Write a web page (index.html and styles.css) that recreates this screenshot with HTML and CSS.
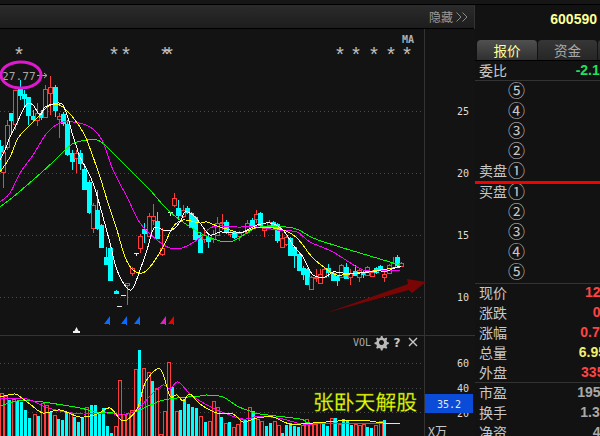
FILE: index.html
```html
<!DOCTYPE html>
<html lang="zh">
<head>
<meta charset="utf-8">
<title>600590</title>
<link rel="stylesheet" href="styles.css">
</head>
<body>
<div class="app">
  <div class="topline"></div>
  <div class="workspace">
    <section class="main">
      <header class="toolbar">
        <span class="hide-label">隐藏</span>
        <svg class="chevrons" width="12" height="10" viewBox="0 0 12 10"><path d="M0.5 0.5 5 5 0.5 9.5M6.5 0.5 11 5 6.5 9.5"/></svg>
      </header>
      <svg id="chart" class="chart" width="475" height="407" viewBox="0 29 475 407">
        <g id="grid"></g>
        <g id="volumes"></g>
        <g id="volume-lines"></g>
        <g id="candles"></g>
        <g id="price-lines"></g>
        <line class="divider" x1="0" y1="335.5" x2="475" y2="335.5"/>
        <line class="divider" x1="424.5" y1="29" x2="424.5" y2="436"/>
        <g class="marks">
          <text x="19" y="62">*</text><text x="114" y="62">*</text><text x="126" y="62">*</text><text x="165" y="62">*</text><text x="169" y="62">*</text>
          <text x="340" y="62">*</text><text x="356" y="62">*</text><text x="374" y="62">*</text><text x="391" y="62">*</text><text x="407" y="62">*</text>
        </g>
        <text class="ma-label" x="402" y="43">MA</text>
        <text class="peak" x="2" y="80">27.77</text>
        <path class="peak-arrow" d="M37 75.5H47M44 73 47 75.5 44 78"/>
        <ellipse class="peak-ring" cx="21" cy="75" rx="20" ry="13"/>
        <path class="low-tick" d="M121 295.5H126M117 306.5H122"/>
        <path class="flag-white" d="M76.500 327 78.500 331H80V333H73V331H74.500Z"/>
        <path class="flag-blue" d="M110 316V325H109V324H104Z"/>
        <path class="flag-blue" d="M127 316V325H126V324H121Z"/>
        <path class="flag-blue" d="M140 316V325H139V324H134Z"/>
        <path class="flag-pink" d="M166 316V325H165V324H160Z"/>
        <path class="flag-red" d="M174 316V325H173V324H168Z"/>
        <path class="trend-arrow" d="M326 313 408 284 407 279 426 282 412 293 409 290Z"/>
        <g class="axis">
          <text x="457" y="115">25</text>
          <text x="457" y="177">20</text>
          <text x="457" y="239">15</text>
          <text x="457" y="301">10</text>
          <text x="457" y="367">60</text>
          <text x="457" y="392">40</text>
          <text x="457" y="417">20</text>
        </g>
        <rect class="value-box" x="425" y="394" width="48" height="19"/>
        <text class="value-text" x="437" y="408">35.2</text>
        <text class="unit" x="428" y="436">X万</text>
        <text class="vol-label" x="353" y="346">VOL</text>
        <path class="gear" d="M381 336l1.500 0 .5 1.800 1.600.7 1.600-.9 1.100 1.100-.9 1.600.7 1.600 1.800.5v1.600l-1.800.5-.7 1.600.9 1.600-1.100 1.100-1.600-.9-1.600.7-.5 1.800h-1.600l-.5-1.800-1.600-.7-1.600.9-1.100-1.100.9-1.600-.7-1.600-1.800-.5v-1.600l1.800-.5.7-1.600-.9-1.600 1.100-1.100 1.600.9 1.600-.7.5-1.800zM381.500 340a2.500 2.500 0 1 0 .01 0z"/>
        <text class="help" x="393.500" y="347">?</text>
        <path class="close" d="M409 338 417 346M417 338 409 346"/>
        <text class="watermark" x="313" y="410">张卧天解股</text>
      </svg>
    </section>
    <aside class="panel">
      <div class="code">600590</div>
      <nav class="tabs">
        <span class="tab tab-active">报价</span>
        <span class="tab">资金</span>
        <span class="tab tab-stub"></span>
      </nav>
      <div class="row row-ratio"><span class="label">委比</span><span class="value green">-2.15%</span></div>
      <div class="book">
        <div class="row"><span class="label"></span><span class="circle">⑤</span></div>
        <div class="row"><span class="label"></span><span class="circle">④</span></div>
        <div class="row"><span class="label"></span><span class="circle">③</span></div>
        <div class="row"><span class="label"></span><span class="circle">②</span></div>
        <div class="row"><span class="label">卖盘</span><span class="circle">①</span></div>
      </div>
      <div class="redline"></div>
      <div class="book book-buy">
        <div class="row"><span class="label">买盘</span><span class="circle">①</span></div>
        <div class="row"><span class="label"></span><span class="circle">②</span></div>
        <div class="row"><span class="label"></span><span class="circle">③</span></div>
        <div class="row"><span class="label"></span><span class="circle">④</span></div>
        <div class="row"><span class="label"></span><span class="circle">⑤</span></div>
      </div>
      <div class="quotes quotes-first">
        <div class="row"><span class="label">现价</span><span class="value red">12.59</span></div>
        <div class="row"><span class="label">涨跌</span><span class="value red">0.09</span></div>
        <div class="row"><span class="label">涨幅</span><span class="value red">0.72%</span></div>
        <div class="row"><span class="label">总量</span><span class="value yellow">6.95万</span></div>
        <div class="row"><span class="label">外盘</span><span class="value red">33512</span></div>
      </div>
      <div class="quotes quotes-second">
        <div class="row"><span class="label">市盈</span><span class="value grey">195.42</span></div>
        <div class="row"><span class="label">换手</span><span class="value grey">1.35%</span></div>
        <div class="row"><span class="label">净资</span><span class="value grey">4.05</span></div>
      </div>
    </aside>
  </div>
</div>
<script src="app.js"></script>
</body>
</html>
```
FILE: styles.css
```css
* { box-sizing: border-box; }
html, body { margin: 0; padding: 0; background: #131313; }
.app { width: 600px; height: 436px; overflow: hidden; display: flex; flex-direction: column; color: #c8c8c8; font-family: "Noto Sans CJK SC", sans-serif; }
.topline { height: 5px; flex: none; background: #161616; border-bottom: 1px solid #000; }
.workspace { flex: 1; display: flex; min-height: 0; }
.main { flex: none; width: 475px; display: flex; flex-direction: column; border-right: 1px solid #333; }
.toolbar { height: 24px; flex: none; display: flex; align-items: center; justify-content: flex-end; gap: 3px; padding: 0 6px 0 0; background: linear-gradient(#2b2b2b, #1d1d1d); border-bottom: 1px solid #000; }
.hide-label { font-size: 12px; color: #9a9a9a; line-height: 1; }
.chevrons path { fill: none; stroke: #8a8a8a; stroke-width: 1; }
.chart { display: block; flex: none; background: #131313; }
.gridline { stroke: #4a4a4a; stroke-width: 1; stroke-dasharray: 1 3; }
.divider { stroke: #333; stroke-width: 1; }
.candle-body { stroke-width: 1; shape-rendering: crispEdges; }
.up { stroke: #ff3c3c; fill: #131313; }
.down { stroke: #00ffff; fill: #00ffff; }
.wick { stroke-width: 1; shape-rendering: crispEdges; }
.tee { stroke: #e8e8e8; stroke-width: 1; shape-rendering: crispEdges; }
.bar-up { stroke: #ff3c3c; fill: #131313; shape-rendering: crispEdges; }
.bar-down { fill: #00ffff; shape-rendering: crispEdges; }
.curve { fill: none; stroke-width: 1; shape-rendering: crispEdges; }
.ma-white { stroke: #fff; }
.ma-yellow { stroke: #ffff00; }
.ma-pink { stroke: #ff00ff; }
.ma-green { stroke: #00ff00; }
.marks text { font: 20px "Liberation Mono", monospace; fill: #c0c0c0; text-anchor: middle; }
.ma-label { font: bold 10px "DejaVu Sans Mono", monospace; fill: #b0b0b0; }
.peak { font: 11.200px "DejaVu Sans Mono", monospace; fill: #a8a8a8; }
.peak-arrow { fill: none; stroke: #a8a8a8; stroke-width: 1; }
.peak-ring { fill: none; stroke: #e018d0; stroke-width: 3; }
.low-tick { stroke: #e8e8e8; stroke-width: 1; fill: none; }
.flag-white { fill: #f0f0f0; }
.flag-blue { fill: #0a6cff; }
.flag-pink { fill: #e020c8; }
.flag-red { fill: #f00000; }
.trend-arrow { fill: #7a0505; }
.axis text { font: 10px "DejaVu Sans Mono", monospace; fill: #dcdcdc; }
.value-box { fill: #0a4bd8; }
.value-text { font: 10px "DejaVu Sans Mono", monospace; fill: #e8e8e8; }
.unit { font: 12px "Noto Sans CJK SC", sans-serif; fill: #c8c8c8; }
.vol-label { font: 10px "DejaVu Sans Mono", monospace; fill: #aaa; }
.gear { fill: #b8b8b8; fill-rule: evenodd; }
.help { font: bold 12px "DejaVu Sans", sans-serif; fill: #c8c8c8; }
.close { stroke: #c8c8c8; stroke-width: 1.400; fill: none; }
.watermark { font: 20.800px "Noto Sans CJK SC", sans-serif; fill: #ffff00; stroke: #3c8c10; stroke-width: 0.3; }
.panel { flex: none; width: 145px; background: #121212; }
.code { height: 35px; padding: 7px 23px 0 0; text-align: right; font: bold 14px/14px "Liberation Sans", sans-serif; color: #ffff99; }
.tabs { height: 21px; display: flex; gap: 1px; padding-left: 2px; border-bottom: 1px solid #000; }
.tab { width: 59px; height: 20px; border-radius: 4px 4px 0 0; background: linear-gradient(#363636, #262626); font-size: 13.500px; line-height: 20px; text-align: center; color: #a8a8a8; }
.tab-active { width: 60px; background: linear-gradient(#505050, #303030); color: #ffff99; }
.tab-stub { width: 20px; }
.row { height: 20px; display: flex; align-items: center; padding: 0 0 2px 4px; }
.row-ratio { height: 20px; border-bottom: 1px solid #333; }
.label { width: 29px; font-size: 14px; line-height: 18px; color: #c8c8c8; flex: none; }
.circle { font-size: 17px; line-height: 18px; color: #c8c8c8; }
.value { margin-left: auto; font: bold 14px/18px "Liberation Sans", "Noto Sans CJK SC", sans-serif; }
.redline { height: 3px; background: #f50000; position: relative; z-index: 1; }
.book-buy { margin-top: -2px; }
.quotes { border-top: 1px solid #333; }
.quotes-first { margin-top: 1px; height: 99px; }
.quotes-first .row:first-child { margin-top: -1px; }
.green { color: #20e060; }
.red { color: #ff4444; }
.yellow { color: #f0f070; }
.grey { color: #a8a8a8; }
```
FILE: app.js
```js
var NS = 'http://www.w3.org/2000/svg';
function el(parent, tag, attrs) {
  var n = document.createElementNS(NS, tag);
  for (var k in attrs) n.setAttribute(k, attrs[k]);
  parent.appendChild(n);
  return n;
}
function $(id) { return document.getElementById(id); }

[111, 173, 235, 297, 363, 388, 412].forEach(function (y) {
  el($('grid'), 'line', { 'class': 'gridline', x1: 0, x2: 424, y1: y + 0.5, y2: y + 0.5 });
});

// [x, bodyTop, bodyBottom, wickTop, wickBottom, type] u = red outline, d = cyan, t = white tee
var candles = [
 [0,146,165,140,170,'d'],[3,152,172,145,188,'u'],[7,125,147,120,150,'u'],[11,113,120,113,133,'d'],
 [15,90,124,90,130,'u'],[20,89,95,80,100,'d'],[24,94,98,90,108,'d'],[28,97,115,97,125,'d'],
 [33,116,119,110,122,'d'],[37,113,120,103,126,'u'],[41,113,117,110,120,'d'],[45,89,117,85,118,'u'],
 [50,87,93,76,115,'u'],[55,87,110,85,117,'d'],[59,116,119,113,138,'u'],[63,114,123,112,126,'d'],
 [67,124,154,120,156,'d'],[72,153,161,150,170,'d'],[76,153,158,150,173,'u'],[80,153,163,150,170,'d'],
 [84,169,189,167,190,'d'],[89,182,212,180,214,'d'],[93,205,228,203,233,'u'],[97,210,228,190,230,'d'],
 [101,225,247,224,248,'d'],[106,257,264,247,265,'d'],[110,248,280,246,281,'d'],[116,291,293,290,294,'d'],
 [127,283,285,283,305,'u'],[132,268,273,267,276,'u'],[136,253,254,253,256,'t'],[140,236,248,234,253,'u'],
 [144,229,233,223,243,'d'],[149,216,236,213,237,'u'],[153,216,220,204,225,'u'],[157,221,238,212,239,'d'],
 [162,248,254,228,256,'u'],[170,212,213,212,216,'t'],[174,198,205,193,207,'u'],[178,208,215,200,220,'d'],
 [183,210,216,205,218,'u'],[187,208,212,206,214,'d'],[191,213,227,212,228,'d'],[195,217,239,216,241,'d'],
 [200,235,252,232,252,'d'],[204,235,239,230,243,'u'],[208,237,241,235,248,'d'],[213,234,239,230,243,'u'],
 [217,223,235,217,236,'u'],[222,222,223,214,230,'u'],[226,222,232,220,234,'d'],[230,232,234,230,237,'u'],
 [234,232,237,231,239,'d'],[239,233,236,231,241,'u'],[247,223,232,220,234,'u'],[252,220,225,218,227,'d'],
 [256,214,219,210,223,'u'],[260,213,225,212,226,'d'],[264,228,230,226,237,'u'],[269,222,225,220,227,'u'],
 [273,222,227,221,229,'d'],[277,224,240,223,243,'d'],[282,238,247,233,248,'u'],[286,237,244,235,246,'u'],
 [290,238,255,237,256,'d'],[294,247,255,246,268,'d'],[299,254,270,253,271,'d'],[303,268,274,266,280,'d'],
 [307,269,284,268,285,'d'],[311,277,289,276,290,'u'],[316,277,278,269,282,'u'],[320,274,283,269,284,'u'],
 [324,269,277,268,278,'u'],[328,268,272,264,277,'d'],[333,273,280,272,281,'d'],[337,276,280,275,286,'d'],
 [341,265,277,264,278,'u'],[346,267,278,263,279,'d'],[350,273,277,269,285,'u'],[355,271,275,265,276,'d'],
 [359,270,277,269,282,'u'],[363,272,274,271,278,'d'],[367,267,275,266,276,'u'],[372,272,276,270,277,'u'],
 [376,268,272,267,274,'d'],[380,266,270,265,271,'d'],[384,274,277,272,282,'u'],[389,265,273,264,274,'u'],
 [393,263,267,257,268,'u'],[397,257,265,255,267,'d'],[401,263,266,262,267,'u']
];
candles.forEach(function (c) {
  var g = $('candles'), x = c[0], t = c[5];
  if (t === 't') {
    el(g, 'path', { 'class': 'tee', fill: 'none', d: 'M' + (x - 2) + ' ' + (c[1] + 0.5) + 'H' + (x + 3) + 'M' + (x + 0.5) + ' ' + c[1] + 'V' + c[4] });
    return;
  }
  var col = t === 'u' ? 'up' : 'down';
  el(g, 'line', { 'class': 'wick ' + col, x1: x + 0.5, x2: x + 0.5, y1: c[3], y2: c[4] });
  el(g, 'rect', { 'class': 'candle-body ' + col, x: x - 1.5, y: c[1] + 0.5, width: 4, height: c[2] - c[1] });
});

// bar heights up from y=436; negative = falling (cyan), positive = rising (red)
var vols = [43,40,-36,37,-35,-34,-26,-18,22,-20,33,31,-24,21,-17,-16,-24,23,-19,-14,-19,29,-31,-31,-23,-28,-10,-3,10,56,
 22,23,26,67,-86,68,64,-55,48,2,25,74,-49,25,-26,-37,-32,-29,
 -28,20,-14,15,35,29,-19,13,-14,9,12,17,-16,29,-25,17,15,-10,-13,15,11,-3,-11,-13,-10,-9,11,17,12,12,13,-12,-10,18,-18,12,-17,-15,-11,12,11,12,-9,-8,11,15,-16];
vols.forEach(function (v, i) {
  var x = Math.round(i * 4.07), h = Math.abs(v), g = $('volumes');
  if (v < 0) el(g, 'rect', { 'class': 'bar-down', x: x, y: 436 - h, width: 3, height: h });
  else el(g, 'rect', { 'class': 'bar-up', x: x + 0.5, y: 436.5 - h, width: 3, height: h + 2 });
});

function curve(parent, cls, pts) {
  var d = 'M' + pts[0][0] + ' ' + pts[0][1];
  for (var i = 0; i < pts.length - 1; i++) {
    var p0 = pts[i ? i - 1 : 0], p1 = pts[i], p2 = pts[i + 1], p3 = pts[i + 2 < pts.length ? i + 2 : i + 1];
    d += 'C' + (p1[0] + (p2[0] - p0[0]) / 6).toFixed(1) + ' ' + (p1[1] + (p2[1] - p0[1]) / 6).toFixed(1) + ' ' +
      (p2[0] - (p3[0] - p1[0]) / 6).toFixed(1) + ' ' + (p2[1] - (p3[1] - p1[1]) / 6).toFixed(1) + ' ' + p2[0] + ' ' + p2[1];
  }
  el(parent, 'path', { 'class': 'curve ' + cls, d: d });
}

var price = $('price-lines');
curve(price, 'ma-green', [[0,207],[13,197],[33,180],[53,162],[67,148],[77,142],[97,140],[110,150],[133,173],[150,190],[170,212],[200,233],[220,241],[233,241],[247,233],[260,227],[293,228],[313,238],[340,247],[360,253],[380,259],[400,265]]);
curve(price, 'ma-pink', [[0,202],[10,193],[20,173],[33,155],[47,133],[60,123],[73,122],[90,127],[102,140],[113,170],[127,197],[140,223],[157,240],[170,248],[182,248],[200,238],[210,228],[220,226],[237,227],[257,227],[277,230],[297,232],[310,242],[333,252],[357,267],[370,271],[400,270]]);
curve(price, 'ma-yellow', [[0,172],[10,157],[17,140],[23,132],[37,118],[47,107],[55,104],[63,107],[75,120],[83,132],[88,143],[100,177],[108,203],[117,230],[125,257],[133,270],[142,273],[150,267],[163,247],[173,227],[183,220],[200,223],[207,222],[217,226],[230,230],[240,233],[250,230],[260,227],[283,230],[297,238],[312,257],[325,268],[337,275],[357,273],[380,270],[400,267]]);
curve(price, 'ma-white', [[0,160],[5,150],[10,137],[17,123],[22,112],[27,104],[33,105],[40,115],[45,107],[53,104],[62,104],[68,118],[72,133],[77,148],[80,157],[93,183],[103,217],[110,243],[117,270],[127,288],[133,288],[140,270],[147,250],[154,228],[163,230],[172,230],[180,222],[185,212],[193,215],[200,223],[210,235],[220,232],[233,233],[243,232],[257,225],[270,223],[283,230],[293,245],[303,257],[313,275],[325,277],[333,272],[343,273],[360,273],[377,271],[387,271],[397,267],[401,266]]);

var volLines = $('volume-lines');
curve(volLines, 'ma-green', [[0,406],[17,401],[33,401],[50,403],[80,408],[97,412],[113,413],[123,415],[137,411],[160,401],[177,398],[200,396],[207,395],[223,397],[237,406],[250,411],[260,414],[300,419],[310,423],[350,423],[400,423]]);
curve(volLines, 'ma-pink', [[0,398],[27,399],[43,406],[60,411],[83,414],[107,413],[123,415],[137,410],[150,396],[163,385],[170,389],[178,382],[190,394],[200,401],[217,410],[243,419],[260,416],[283,419],[303,424],[333,423],[400,424]]);
curve(volLines, 'ma-yellow', [[0,397],[15,394],[23,399],[30,404],[43,413],[60,410],[80,417],[97,414],[110,408],[123,421],[137,409],[145,383],[157,369],[163,374],[170,396],[177,395],[183,401],[190,394],[200,404],[217,413],[233,414],[243,422],[257,418],[273,417],[290,424],[313,423],[357,420],[383,423],[400,423]]);
```
